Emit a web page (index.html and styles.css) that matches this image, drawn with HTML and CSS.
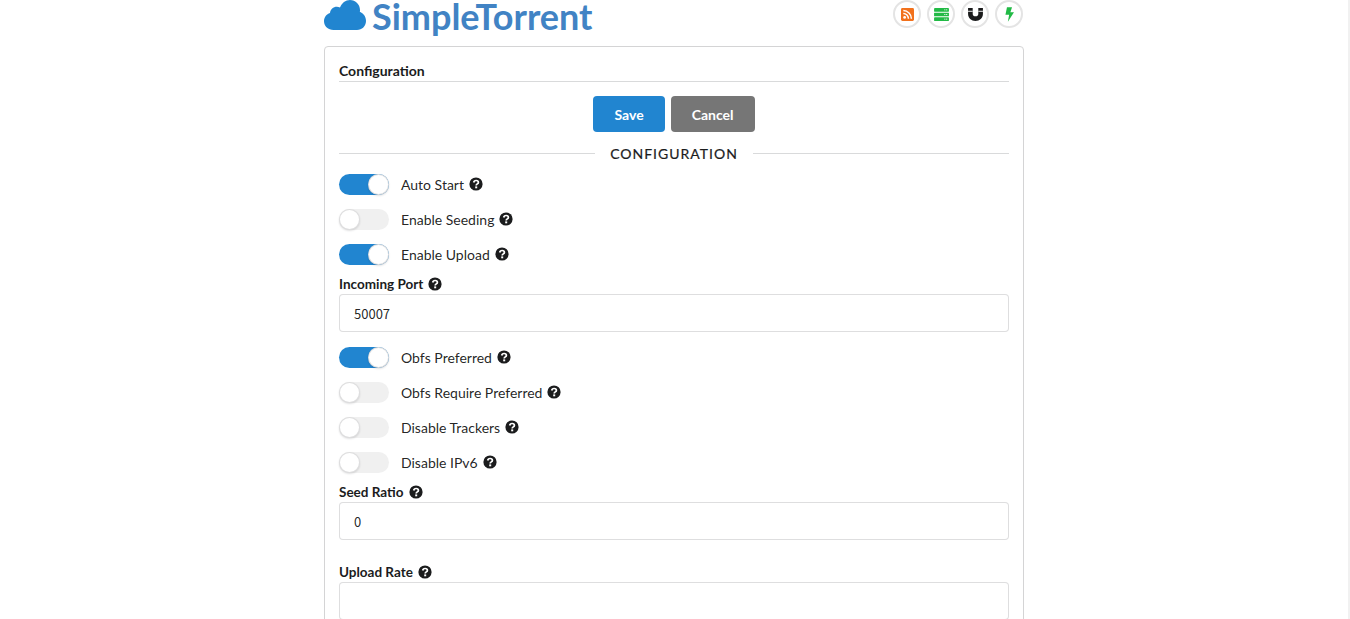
FILE: index.html
```html
<!DOCTYPE html>
<html lang="en">
<head>
<meta charset="utf-8">
<title>SimpleTorrent</title>
<link rel="stylesheet" href="styles.css">
</head>
<body>
<svg class="defs" width="0" height="0">
  <symbol id="q" viewBox="0 0 14 14">
    <circle cx="7" cy="7" r="6.6" fill="#1b1c1d"/>
    <path d="M4.7 5.5C4.9 4.2 5.8 3.5 7.1 3.5C8.5 3.5 9.4 4.3 9.4 5.4C9.4 6.9 7.2 6.9 7.2 8.5" fill="none" stroke="#fff" stroke-width="1.7"/>
    <rect x="6.2" y="9.4" width="2" height="1.9" fill="#fff"/>
  </symbol>
</svg>
<main class="page">
  <header class="top">
    <h1 class="brand">
      <svg class="cloud" viewBox="0 0 42 30"><path fill="#2185d0" d="M9.5 30C4.2 30 0 26.100 0 21.200C0 17.400 2.500 14.200 6 13C6.300 9.400 9.300 6.800 12.800 6.800C13.900 6.800 15 7.100 16 7.600C17.800 3.100 21.500 0 26 0C31.600 0 36 4.500 36 10C36 10.600 36 11.200 35.800 11.800C39.400 13.300 42 16.800 42 21C42 26 38 30 33 30Z"/></svg>
      <span>SimpleTorrent</span>
    </h1>
    <nav class="tools">
      <a class="tool"><svg viewBox="0 0 14 14" class="ico"><rect width="14" height="14" rx="1.5" fill="#f2711c"/><g fill="none" stroke="#fff" stroke-width="1.6"><path d="M2.500 2.800A8.700 8.700 0 0 1 11.200 11.500"/><path d="M2.500 6A5.500 5.500 0 0 1 8 11.500"/></g><circle cx="3.900" cy="10.100" r="1.500" fill="#fff"/></svg></a>
      <a class="tool"><svg viewBox="0 0 16 14" class="ico ico-wide"><g fill="#21ba45"><rect y="0" width="16" height="4" rx=".5"/><rect y="5" width="16" height="4" rx=".5"/><rect y="10" width="16" height="4" rx=".5"/></g><g fill="#fff"><rect x="11" y="1.500" width="1.200" height="1"/><rect x="13" y="1.500" width="1.200" height="1"/><rect x="11" y="6.500" width="1.200" height="1"/><rect x="13" y="6.500" width="1.200" height="1"/><rect x="11" y="11.500" width="1.200" height="1"/><rect x="13" y="11.500" width="1.200" height="1"/></g></svg></a>
      <a class="tool"><svg viewBox="0 0 16 14" class="ico ico-wide"><path fill="#1b1c1d" d="M0 0H5V6.500C5 8 6.300 9 8 9S11 8 11 6.500V0H16V6.500C16 11 12.500 14 8 14S0 11 0 6.500Z"/><g fill="#fff"><rect x="0" y="3" width="5" height="1"/><rect x="11" y="3" width="5" height="1"/></g></svg></a>
      <a class="tool"><svg viewBox="0 0 10 16" class="ico ico-bolt"><path fill="#21ba45" d="M2.200 0H7.800L6 5.500H10L3.200 16L4.600 8.200H0.500Z"/></svg></a>
    </nav>
  </header>

  <section class="card">
    <h2 class="card-title">Configuration</h2>
    <div class="actions">
      <button class="btn btn-save">Save</button>
      <button class="btn btn-cancel">Cancel</button>
    </div>
    <div class="divider"><span>CONFIGURATION</span></div>

    <label class="row"><span class="toggle on"></span><span>Auto Start</span><svg class="help"><use href="#q"/></svg></label>
    <label class="row"><span class="toggle"></span><span>Enable Seeding</span><svg class="help"><use href="#q"/></svg></label>
    <label class="row"><span class="toggle on"></span><span>Enable Upload</span><svg class="help"><use href="#q"/></svg></label>

    <div class="field">
      <div class="field-label"><span>Incoming Port</span><svg class="help"><use href="#q"/></svg></div>
      <input class="input" type="text" value="50007">
    </div>

    <label class="row"><span class="toggle on"></span><span>Obfs Preferred</span><svg class="help"><use href="#q"/></svg></label>
    <label class="row"><span class="toggle"></span><span>Obfs Require Preferred</span><svg class="help"><use href="#q"/></svg></label>
    <label class="row"><span class="toggle"></span><span>Disable Trackers</span><svg class="help"><use href="#q"/></svg></label>
    <label class="row"><span class="toggle"></span><span>Disable IPv6</span><svg class="help"><use href="#q"/></svg></label>

    <div class="field">
      <div class="field-label"><span>Seed Ratio</span><svg class="help"><use href="#q"/></svg></div>
      <input class="input" type="text" value="0">
    </div>
    <div class="field field-next">
      <div class="field-label"><span>Upload Rate</span><svg class="help"><use href="#q"/></svg></div>
      <input class="input" type="text" value="">
    </div>
  </section>
</main>
<div class="scrollbar"></div>
</body>
</html>
```

FILE: styles.css
```css
* { box-sizing: border-box; }
html, body { height: 100%; }
body {
  margin: 0;
  display: flex;
  height: 619px;
  overflow: hidden;
  background: #fff;
  color: #1b1c1d;
  font-family: Lato, "Liberation Sans", sans-serif;
  font-size: 14px;
}
.defs { position: absolute; }
.page { flex: 1; display: flex; flex-direction: column; align-items: center; min-width: 0; }
.scrollbar { width: 2px; background: #f1f1f1; }

.top { width: 700px; height: 46px; flex: none; display: flex; justify-content: space-between; overflow: hidden; }
.brand {
  margin: -6px 0 0;
  display: flex;
  align-items: flex-start;
  gap: 6px;
  font-size: 36px;
  line-height: 44px;
  font-weight: 700;
  color: #4183c4;
}
.cloud { width: 42px; height: 30px; margin-top: 6px; }
.tools { display: flex; gap: 6px; padding-right: 1px; }
.tool {
  width: 28px;
  height: 28px;
  border-radius: 50%;
  border: 2px solid #e4e4e4;
  display: flex;
  align-items: center;
  justify-content: center;
}
.ico { width: 13px; height: 13px; }
.ico-wide { width: 15px; height: 13px; }
.ico-bolt { width: 9px; height: 15px; }

.card {
  width: 700px;
  flex: none;
  border: 1px solid #d4d4d5;
  border-radius: 4px;
  padding: 14px 14px 20px;
}
.card-title {
  margin: 0;
  font-size: 14px;
  line-height: 20px;
  font-weight: 700;
  padding-bottom: 1px;
  border-bottom: 1px solid #d9dadb;
  height: 21px;
}
.actions { display: flex; justify-content: center; gap: 6px; margin-top: 14px; }
.btn {
  height: 36px;
  border: 0;
  border-radius: 4px;
  padding: 0 21px;
  color: #fff;
  font-family: inherit;
  font-size: 14px;
  font-weight: 700;
}
.btn-save { background: #2185d0; }
.btn-cancel { background: #767676; }

.divider {
  display: flex;
  align-items: center;
  gap: 15px;
  height: 18px;
  margin-top: 12px;
  margin-bottom: 11px;
  font-size: 14px;
  font-weight: 700;
  letter-spacing: 1px;
  color: #1b1c1d;
}
.divider span { font-weight: 400; -webkit-text-stroke: .2px #1b1c1d; }
.divider::before, .divider::after { content: ""; flex: 1; height: 1px; background: #d9dadb; }

.row { display: flex; align-items: center; height: 22px; margin-bottom: 13px; color: rgba(0,0,0,.87); }
.row > span:nth-child(2) { margin-left: 12px; }
.toggle { position: relative; width: 50px; height: 21px; border-radius: 11px; background: #f0f0f0; flex: none; }
.toggle::after {
  content: "";
  position: absolute;
  left: 0;
  top: 0;
  width: 21px;
  height: 21px;
  border-radius: 50%;
  background: #fff;
  box-shadow: 0 1px 2px rgba(34,36,38,.15), 0 0 0 1px rgba(34,36,38,.15) inset;
}
.toggle.on { background: #2185d0; }
.toggle.on::after { left: 29px; }
.help { width: 14px; height: 14px; margin-left: 5px; flex: none; }

.field { margin-top: -3px; margin-bottom: 14px; }
.field-next { margin-top: 23px; }
.field-label { display: flex; align-items: center; height: 18px; margin-bottom: 1px; font-weight: 700; font-size: 13.5px; }
.input {
  display: block;
  width: 100%;
  height: 38px;
  border: 1px solid rgba(34,36,38,.15);
  border-radius: 4px;
  padding: 0 14px;
  font-family: "Noto Sans CJK JP", "Liberation Mono", monospace;
  font-size: 13px;
  color: rgba(0,0,0,.87);
  background: #fff;
  outline: 0;
}
```
